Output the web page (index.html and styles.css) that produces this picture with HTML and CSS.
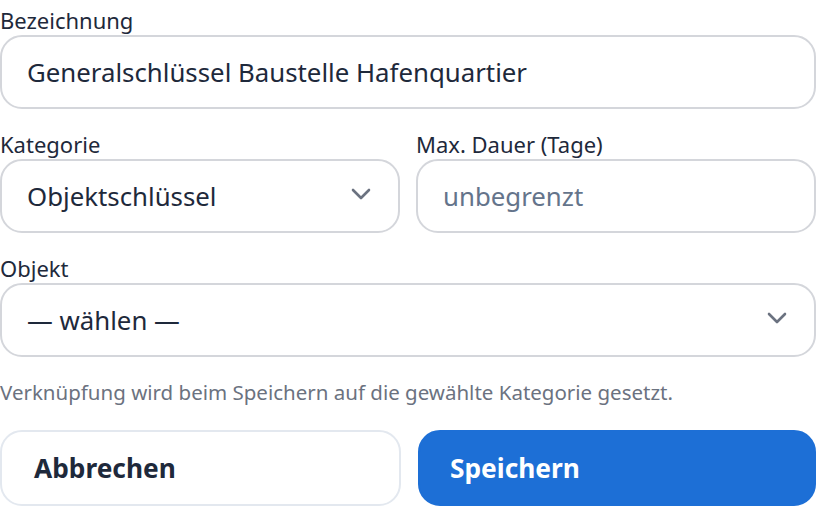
FILE: index.html
```html
<!DOCTYPE html>
<html lang="de">
<head>
<meta charset="utf-8">
<title>Schlüssel bearbeiten</title>
<link rel="stylesheet" href="styles.css">
</head>
<body>
<form class="form">
  <div class="field">
    <label class="label" for="name">Bezeichnung</label>
    <input class="control" id="name" type="text" value="Generalschlüssel Baustelle Hafenquartier">
  </div>
  <div class="row">
    <div class="field">
      <label class="label" for="cat">Kategorie</label>
      <div class="select-wrap">
        <select class="control select" id="cat">
          <option>Objektschlüssel</option>
        </select>
        <svg class="chevron" width="20" height="12" viewBox="0 0 20 12"><path d="M2 2 L10 10 L18 2" fill="none" stroke="#6b7280" stroke-width="2.6" stroke-linecap="round" stroke-linejoin="round"/></svg>
      </div>
    </div>
    <div class="field">
      <label class="label" for="days">Max. Dauer (Tage)</label>
      <input class="control" id="days" type="text" placeholder="unbegrenzt">
    </div>
  </div>
  <div class="field">
    <label class="label" for="obj">Objekt</label>
    <div class="select-wrap">
      <select class="control select" id="obj">
        <option>— wählen —</option>
      </select>
      <svg class="chevron" width="20" height="12" viewBox="0 0 20 12"><path d="M2 2 L10 10 L18 2" fill="none" stroke="#6b7280" stroke-width="2.6" stroke-linecap="round" stroke-linejoin="round"/></svg>
    </div>
  </div>
  <p class="hint">Verknüpfung wird beim Speichern auf die gewählte Kategorie gesetzt.</p>
  <div class="actions">
    <button type="button" class="btn btn-secondary">Abbrechen</button>
    <button type="button" class="btn btn-primary">Speichern</button>
  </div>
</form>
</body>
</html>
```
FILE: styles.css
```css
* { box-sizing: border-box; }
html, body { margin: 0; padding: 0; background: #ffffff; }
body {
  font-family: "Noto Sans", "Open Sans", sans-serif;
  color: #1e293b;
  width: 816px;
}
.form {
  display: flex;
  flex-direction: column;
  padding-top: 7px;
}
.field {
  display: flex;
  flex-direction: column;
  margin-bottom: 22px;
}
.row {
  display: grid;
  grid-template-columns: 400px 400px;
  column-gap: 16px;
}
.label {
  font-size: 22px;
  line-height: 26px;
  margin-bottom: 2px;
  color: #1e293b;
}
.control {
  display: block;
  width: 100%;
  height: 74px;
  margin: 0;
  padding: 0 25px;
  border: 2px solid #d4d6db;
  border-radius: 22px;
  background: #ffffff;
  font-family: inherit;
  font-size: 25.8px;
  color: #1e293b;
  outline: none;
}
.control::placeholder { color: #64748b; opacity: 1; }
.select-wrap { position: relative; }
.select {
  appearance: none;
  -webkit-appearance: none;
}
.chevron {
  position: absolute;
  right: 29px;
  top: 29px;
  pointer-events: none;
}
.hint {
  margin: 0;
  font-size: 20.5px;
  line-height: 26px;
  color: #6b7280;
}
.actions {
  display: grid;
  grid-template-columns: 401px 398px;
  column-gap: 17px;
  margin-top: 25px;
}
.btn {
  height: 76px;
  border-radius: 22px;
  font-family: inherit;
  font-size: 26.3px;
  font-weight: 700;
  text-align: left;
  padding: 0 32px;
  cursor: pointer;
}
.btn-secondary {
  background: #ffffff;
  border: 2px solid #e3e8ef;
  color: #1e293b;
}
.btn-primary {
  background: #1d6fd6;
  border: 2px solid #1d6fd6;
  color: #ffffff;
  padding-left: 30px;
}
```
